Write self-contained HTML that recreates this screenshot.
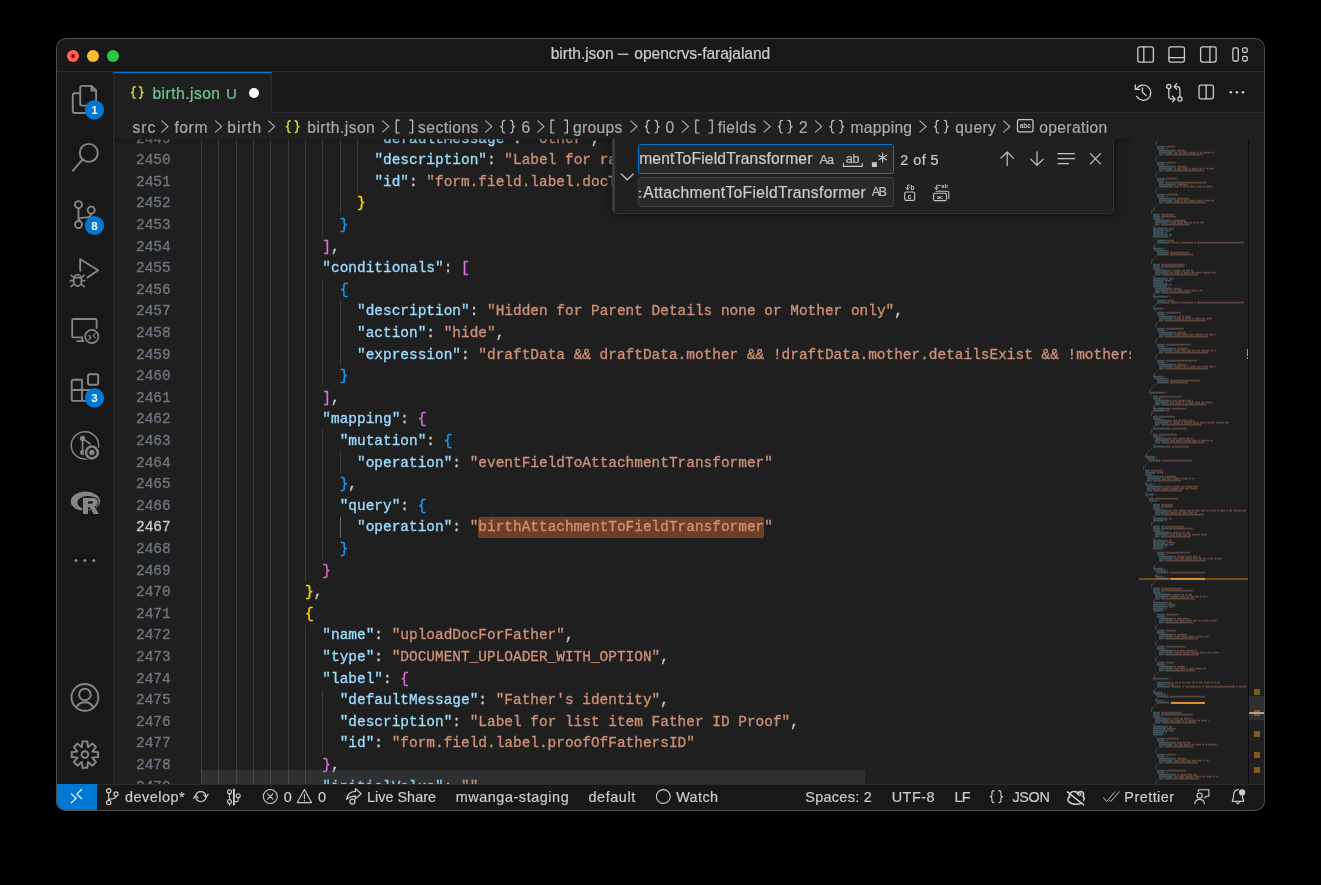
<!DOCTYPE html>
<html><head><meta charset="utf-8"><title>birth.json — opencrvs-farajaland</title>
<style>
*{box-sizing:border-box;margin:0;padding:0}
html,body{width:1321px;height:885px;background:#000;overflow:hidden}
body{font-family:"Liberation Sans",sans-serif;position:relative}
#win{position:absolute;left:56px;top:38px;width:1209px;height:773px;border-radius:10px;overflow:hidden;background:#181818}
#pg{position:absolute;left:-56px;top:-38px;width:1321px;height:885px;will-change:transform}
#wb{position:absolute;left:0;top:0;right:0;bottom:0;border-radius:10px;box-shadow:inset 0 0 0 1px #4e4e4e;pointer-events:none}
.a{position:absolute}
.t{position:absolute;white-space:pre;-webkit-text-stroke:0.2px}
.m{font-family:"Liberation Mono",monospace;font-size:14.446px;line-height:21.6px;white-space:pre;position:absolute;height:21.6px;-webkit-text-stroke:0.32px}
.n{color:#6e7681;text-align:right;left:120px;width:50.7px}
.k{color:#9cdcfe}.s{color:#ce9178}.p{color:#cccccc}.y{color:#ffd700}.v{color:#da70d6}.b{color:#179fff}
.g{position:absolute;width:1px;background:#3b3b3b}
svg{position:absolute;overflow:visible}
</style></head>
<body><div id="win"><div id="pg">
<div class="a" style="left:56px;top:38px;width:1209px;height:33px;background:#181818"></div>
<div class="a" style="left:56px;top:71px;width:1209px;height:1px;background:#2b2b2b"></div>
<div class="a" style="left:67px;top:50px;width:12px;height:12px;border-radius:6px;background:#ff5f57"></div>
<div class="a" style="left:87px;top:50px;width:12px;height:12px;border-radius:6px;background:#febc2e"></div>
<div class="a" style="left:107px;top:50px;width:12px;height:12px;border-radius:6px;background:#28c840"></div>
<div class="a" style="left:71px;top:54px;width:4px;height:4px;border-radius:2px;background:#8c0b04"></div>
<div class="a" style="left:56px;top:72px;width:57px;height:712px;background:#181818"></div>
<div class="a" style="left:113px;top:72px;width:1px;height:712px;background:#2b2b2b"></div>
<div class="a" style="left:114px;top:72px;width:1151px;height:41px;background:#181818"></div>
<div class="a" style="left:114px;top:112px;width:1151px;height:1px;background:#2b2b2b"></div>
<div class="a" style="left:114px;top:72px;width:158px;height:41px;background:#1f1f1f;border-top:1px solid #0078d4;border-right:1px solid #2b2b2b"></div>
<div class="a" style="left:249px;top:88px;width:10px;height:10px;border-radius:5px;background:#ffffff"></div>
<div class="a" style="left:114px;top:113px;width:1151px;height:671px;background:#1f1f1f"></div>
<div class="a" style="left:56px;top:783.9px;width:1209px;height:27.1px;background:#181818;border-top:1.7px solid #2b2b2b"></div>
<div class="a" style="left:56px;top:784px;width:41px;height:27px;background:#0078d4"></div><div class="a" style="left:114px;top:139.4px;width:1017.2px;height:644.6px;overflow:hidden"><div class="a" style="left:-114px;top:-139.4px;width:1321px;height:885px">
<div class="a" style="left:478.41px;top:517.20px;width:286.08px;height:21.2px;background:#6f3e26;border:1px solid #7d4320;border-radius:2px"></div>
<div class="g" style="left:201.00px;top:128.00px;height:21.6px"></div>
<div class="g" style="left:218.34px;top:128.00px;height:21.6px"></div>
<div class="g" style="left:235.68px;top:128.00px;height:21.6px"></div>
<div class="g" style="left:253.01px;top:128.00px;height:21.6px"></div>
<div class="g" style="left:270.35px;top:128.00px;height:21.6px"></div>
<div class="g" style="left:287.69px;top:128.00px;height:21.6px"></div>
<div class="g" style="left:305.03px;top:128.00px;height:21.6px"></div>
<div class="g" style="left:322.37px;top:128.00px;height:21.6px"></div>
<div class="g" style="left:339.70px;top:128.00px;height:21.6px"></div>
<div class="g" style="left:357.04px;top:128.00px;height:21.6px"></div>
<div class="g" style="left:201.00px;top:149.60px;height:21.6px"></div>
<div class="g" style="left:218.34px;top:149.60px;height:21.6px"></div>
<div class="g" style="left:235.68px;top:149.60px;height:21.6px"></div>
<div class="g" style="left:253.01px;top:149.60px;height:21.6px"></div>
<div class="g" style="left:270.35px;top:149.60px;height:21.6px"></div>
<div class="g" style="left:287.69px;top:149.60px;height:21.6px"></div>
<div class="g" style="left:305.03px;top:149.60px;height:21.6px"></div>
<div class="g" style="left:322.37px;top:149.60px;height:21.6px"></div>
<div class="g" style="left:339.70px;top:149.60px;height:21.6px"></div>
<div class="g" style="left:357.04px;top:149.60px;height:21.6px"></div>
<div class="g" style="left:201.00px;top:171.20px;height:21.6px"></div>
<div class="g" style="left:218.34px;top:171.20px;height:21.6px"></div>
<div class="g" style="left:235.68px;top:171.20px;height:21.6px"></div>
<div class="g" style="left:253.01px;top:171.20px;height:21.6px"></div>
<div class="g" style="left:270.35px;top:171.20px;height:21.6px"></div>
<div class="g" style="left:287.69px;top:171.20px;height:21.6px"></div>
<div class="g" style="left:305.03px;top:171.20px;height:21.6px"></div>
<div class="g" style="left:322.37px;top:171.20px;height:21.6px"></div>
<div class="g" style="left:339.70px;top:171.20px;height:21.6px"></div>
<div class="g" style="left:357.04px;top:171.20px;height:21.6px"></div>
<div class="g" style="left:201.00px;top:192.80px;height:21.6px"></div>
<div class="g" style="left:218.34px;top:192.80px;height:21.6px"></div>
<div class="g" style="left:235.68px;top:192.80px;height:21.6px"></div>
<div class="g" style="left:253.01px;top:192.80px;height:21.6px"></div>
<div class="g" style="left:270.35px;top:192.80px;height:21.6px"></div>
<div class="g" style="left:287.69px;top:192.80px;height:21.6px"></div>
<div class="g" style="left:305.03px;top:192.80px;height:21.6px"></div>
<div class="g" style="left:322.37px;top:192.80px;height:21.6px"></div>
<div class="g" style="left:339.70px;top:192.80px;height:21.6px"></div>
<div class="g" style="left:201.00px;top:214.40px;height:21.6px"></div>
<div class="g" style="left:218.34px;top:214.40px;height:21.6px"></div>
<div class="g" style="left:235.68px;top:214.40px;height:21.6px"></div>
<div class="g" style="left:253.01px;top:214.40px;height:21.6px"></div>
<div class="g" style="left:270.35px;top:214.40px;height:21.6px"></div>
<div class="g" style="left:287.69px;top:214.40px;height:21.6px"></div>
<div class="g" style="left:305.03px;top:214.40px;height:21.6px"></div>
<div class="g" style="left:322.37px;top:214.40px;height:21.6px"></div>
<div class="g" style="left:201.00px;top:236.00px;height:21.6px"></div>
<div class="g" style="left:218.34px;top:236.00px;height:21.6px"></div>
<div class="g" style="left:235.68px;top:236.00px;height:21.6px"></div>
<div class="g" style="left:253.01px;top:236.00px;height:21.6px"></div>
<div class="g" style="left:270.35px;top:236.00px;height:21.6px"></div>
<div class="g" style="left:287.69px;top:236.00px;height:21.6px"></div>
<div class="g" style="left:305.03px;top:236.00px;height:21.6px"></div>
<div class="g" style="left:201.00px;top:257.60px;height:21.6px"></div>
<div class="g" style="left:218.34px;top:257.60px;height:21.6px"></div>
<div class="g" style="left:235.68px;top:257.60px;height:21.6px"></div>
<div class="g" style="left:253.01px;top:257.60px;height:21.6px"></div>
<div class="g" style="left:270.35px;top:257.60px;height:21.6px"></div>
<div class="g" style="left:287.69px;top:257.60px;height:21.6px"></div>
<div class="g" style="left:305.03px;top:257.60px;height:21.6px"></div>
<div class="g" style="left:201.00px;top:279.20px;height:21.6px"></div>
<div class="g" style="left:218.34px;top:279.20px;height:21.6px"></div>
<div class="g" style="left:235.68px;top:279.20px;height:21.6px"></div>
<div class="g" style="left:253.01px;top:279.20px;height:21.6px"></div>
<div class="g" style="left:270.35px;top:279.20px;height:21.6px"></div>
<div class="g" style="left:287.69px;top:279.20px;height:21.6px"></div>
<div class="g" style="left:305.03px;top:279.20px;height:21.6px"></div>
<div class="g" style="left:322.37px;top:279.20px;height:21.6px"></div>
<div class="g" style="left:201.00px;top:300.80px;height:21.6px"></div>
<div class="g" style="left:218.34px;top:300.80px;height:21.6px"></div>
<div class="g" style="left:235.68px;top:300.80px;height:21.6px"></div>
<div class="g" style="left:253.01px;top:300.80px;height:21.6px"></div>
<div class="g" style="left:270.35px;top:300.80px;height:21.6px"></div>
<div class="g" style="left:287.69px;top:300.80px;height:21.6px"></div>
<div class="g" style="left:305.03px;top:300.80px;height:21.6px"></div>
<div class="g" style="left:322.37px;top:300.80px;height:21.6px"></div>
<div class="g" style="left:339.70px;top:300.80px;height:21.6px"></div>
<div class="g" style="left:201.00px;top:322.40px;height:21.6px"></div>
<div class="g" style="left:218.34px;top:322.40px;height:21.6px"></div>
<div class="g" style="left:235.68px;top:322.40px;height:21.6px"></div>
<div class="g" style="left:253.01px;top:322.40px;height:21.6px"></div>
<div class="g" style="left:270.35px;top:322.40px;height:21.6px"></div>
<div class="g" style="left:287.69px;top:322.40px;height:21.6px"></div>
<div class="g" style="left:305.03px;top:322.40px;height:21.6px"></div>
<div class="g" style="left:322.37px;top:322.40px;height:21.6px"></div>
<div class="g" style="left:339.70px;top:322.40px;height:21.6px"></div>
<div class="g" style="left:201.00px;top:344.00px;height:21.6px"></div>
<div class="g" style="left:218.34px;top:344.00px;height:21.6px"></div>
<div class="g" style="left:235.68px;top:344.00px;height:21.6px"></div>
<div class="g" style="left:253.01px;top:344.00px;height:21.6px"></div>
<div class="g" style="left:270.35px;top:344.00px;height:21.6px"></div>
<div class="g" style="left:287.69px;top:344.00px;height:21.6px"></div>
<div class="g" style="left:305.03px;top:344.00px;height:21.6px"></div>
<div class="g" style="left:322.37px;top:344.00px;height:21.6px"></div>
<div class="g" style="left:339.70px;top:344.00px;height:21.6px"></div>
<div class="g" style="left:201.00px;top:365.60px;height:21.6px"></div>
<div class="g" style="left:218.34px;top:365.60px;height:21.6px"></div>
<div class="g" style="left:235.68px;top:365.60px;height:21.6px"></div>
<div class="g" style="left:253.01px;top:365.60px;height:21.6px"></div>
<div class="g" style="left:270.35px;top:365.60px;height:21.6px"></div>
<div class="g" style="left:287.69px;top:365.60px;height:21.6px"></div>
<div class="g" style="left:305.03px;top:365.60px;height:21.6px"></div>
<div class="g" style="left:322.37px;top:365.60px;height:21.6px"></div>
<div class="g" style="left:201.00px;top:387.20px;height:21.6px"></div>
<div class="g" style="left:218.34px;top:387.20px;height:21.6px"></div>
<div class="g" style="left:235.68px;top:387.20px;height:21.6px"></div>
<div class="g" style="left:253.01px;top:387.20px;height:21.6px"></div>
<div class="g" style="left:270.35px;top:387.20px;height:21.6px"></div>
<div class="g" style="left:287.69px;top:387.20px;height:21.6px"></div>
<div class="g" style="left:305.03px;top:387.20px;height:21.6px"></div>
<div class="g" style="left:201.00px;top:408.80px;height:21.6px"></div>
<div class="g" style="left:218.34px;top:408.80px;height:21.6px"></div>
<div class="g" style="left:235.68px;top:408.80px;height:21.6px"></div>
<div class="g" style="left:253.01px;top:408.80px;height:21.6px"></div>
<div class="g" style="left:270.35px;top:408.80px;height:21.6px"></div>
<div class="g" style="left:287.69px;top:408.80px;height:21.6px"></div>
<div class="g" style="left:305.03px;top:408.80px;height:21.6px"></div>
<div class="g" style="left:201.00px;top:430.40px;height:21.6px"></div>
<div class="g" style="left:218.34px;top:430.40px;height:21.6px"></div>
<div class="g" style="left:235.68px;top:430.40px;height:21.6px"></div>
<div class="g" style="left:253.01px;top:430.40px;height:21.6px"></div>
<div class="g" style="left:270.35px;top:430.40px;height:21.6px"></div>
<div class="g" style="left:287.69px;top:430.40px;height:21.6px"></div>
<div class="g" style="left:305.03px;top:430.40px;height:21.6px"></div>
<div class="g" style="left:322.37px;top:430.40px;height:21.6px"></div>
<div class="g" style="left:201.00px;top:452.00px;height:21.6px"></div>
<div class="g" style="left:218.34px;top:452.00px;height:21.6px"></div>
<div class="g" style="left:235.68px;top:452.00px;height:21.6px"></div>
<div class="g" style="left:253.01px;top:452.00px;height:21.6px"></div>
<div class="g" style="left:270.35px;top:452.00px;height:21.6px"></div>
<div class="g" style="left:287.69px;top:452.00px;height:21.6px"></div>
<div class="g" style="left:305.03px;top:452.00px;height:21.6px"></div>
<div class="g" style="left:322.37px;top:452.00px;height:21.6px"></div>
<div class="g" style="left:339.70px;top:452.00px;height:21.6px"></div>
<div class="g" style="left:201.00px;top:473.60px;height:21.6px"></div>
<div class="g" style="left:218.34px;top:473.60px;height:21.6px"></div>
<div class="g" style="left:235.68px;top:473.60px;height:21.6px"></div>
<div class="g" style="left:253.01px;top:473.60px;height:21.6px"></div>
<div class="g" style="left:270.35px;top:473.60px;height:21.6px"></div>
<div class="g" style="left:287.69px;top:473.60px;height:21.6px"></div>
<div class="g" style="left:305.03px;top:473.60px;height:21.6px"></div>
<div class="g" style="left:322.37px;top:473.60px;height:21.6px"></div>
<div class="g" style="left:201.00px;top:495.20px;height:21.6px"></div>
<div class="g" style="left:218.34px;top:495.20px;height:21.6px"></div>
<div class="g" style="left:235.68px;top:495.20px;height:21.6px"></div>
<div class="g" style="left:253.01px;top:495.20px;height:21.6px"></div>
<div class="g" style="left:270.35px;top:495.20px;height:21.6px"></div>
<div class="g" style="left:287.69px;top:495.20px;height:21.6px"></div>
<div class="g" style="left:305.03px;top:495.20px;height:21.6px"></div>
<div class="g" style="left:322.37px;top:495.20px;height:21.6px"></div>
<div class="g" style="left:201.00px;top:516.80px;height:21.6px"></div>
<div class="g" style="left:218.34px;top:516.80px;height:21.6px"></div>
<div class="g" style="left:235.68px;top:516.80px;height:21.6px"></div>
<div class="g" style="left:253.01px;top:516.80px;height:21.6px"></div>
<div class="g" style="left:270.35px;top:516.80px;height:21.6px"></div>
<div class="g" style="left:287.69px;top:516.80px;height:21.6px"></div>
<div class="g" style="left:305.03px;top:516.80px;height:21.6px"></div>
<div class="g" style="left:322.37px;top:516.80px;height:21.6px"></div>
<div class="g" style="left:339.70px;top:516.80px;height:21.6px;background:#6a6a6a"></div>
<div class="g" style="left:201.00px;top:538.40px;height:21.6px"></div>
<div class="g" style="left:218.34px;top:538.40px;height:21.6px"></div>
<div class="g" style="left:235.68px;top:538.40px;height:21.6px"></div>
<div class="g" style="left:253.01px;top:538.40px;height:21.6px"></div>
<div class="g" style="left:270.35px;top:538.40px;height:21.6px"></div>
<div class="g" style="left:287.69px;top:538.40px;height:21.6px"></div>
<div class="g" style="left:305.03px;top:538.40px;height:21.6px"></div>
<div class="g" style="left:322.37px;top:538.40px;height:21.6px"></div>
<div class="g" style="left:201.00px;top:560.00px;height:21.6px"></div>
<div class="g" style="left:218.34px;top:560.00px;height:21.6px"></div>
<div class="g" style="left:235.68px;top:560.00px;height:21.6px"></div>
<div class="g" style="left:253.01px;top:560.00px;height:21.6px"></div>
<div class="g" style="left:270.35px;top:560.00px;height:21.6px"></div>
<div class="g" style="left:287.69px;top:560.00px;height:21.6px"></div>
<div class="g" style="left:305.03px;top:560.00px;height:21.6px"></div>
<div class="g" style="left:201.00px;top:581.60px;height:21.6px"></div>
<div class="g" style="left:218.34px;top:581.60px;height:21.6px"></div>
<div class="g" style="left:235.68px;top:581.60px;height:21.6px"></div>
<div class="g" style="left:253.01px;top:581.60px;height:21.6px"></div>
<div class="g" style="left:270.35px;top:581.60px;height:21.6px"></div>
<div class="g" style="left:287.69px;top:581.60px;height:21.6px"></div>
<div class="g" style="left:201.00px;top:603.20px;height:21.6px"></div>
<div class="g" style="left:218.34px;top:603.20px;height:21.6px"></div>
<div class="g" style="left:235.68px;top:603.20px;height:21.6px"></div>
<div class="g" style="left:253.01px;top:603.20px;height:21.6px"></div>
<div class="g" style="left:270.35px;top:603.20px;height:21.6px"></div>
<div class="g" style="left:287.69px;top:603.20px;height:21.6px"></div>
<div class="g" style="left:201.00px;top:624.80px;height:21.6px"></div>
<div class="g" style="left:218.34px;top:624.80px;height:21.6px"></div>
<div class="g" style="left:235.68px;top:624.80px;height:21.6px"></div>
<div class="g" style="left:253.01px;top:624.80px;height:21.6px"></div>
<div class="g" style="left:270.35px;top:624.80px;height:21.6px"></div>
<div class="g" style="left:287.69px;top:624.80px;height:21.6px"></div>
<div class="g" style="left:305.03px;top:624.80px;height:21.6px"></div>
<div class="g" style="left:201.00px;top:646.40px;height:21.6px"></div>
<div class="g" style="left:218.34px;top:646.40px;height:21.6px"></div>
<div class="g" style="left:235.68px;top:646.40px;height:21.6px"></div>
<div class="g" style="left:253.01px;top:646.40px;height:21.6px"></div>
<div class="g" style="left:270.35px;top:646.40px;height:21.6px"></div>
<div class="g" style="left:287.69px;top:646.40px;height:21.6px"></div>
<div class="g" style="left:305.03px;top:646.40px;height:21.6px"></div>
<div class="g" style="left:201.00px;top:668.00px;height:21.6px"></div>
<div class="g" style="left:218.34px;top:668.00px;height:21.6px"></div>
<div class="g" style="left:235.68px;top:668.00px;height:21.6px"></div>
<div class="g" style="left:253.01px;top:668.00px;height:21.6px"></div>
<div class="g" style="left:270.35px;top:668.00px;height:21.6px"></div>
<div class="g" style="left:287.69px;top:668.00px;height:21.6px"></div>
<div class="g" style="left:305.03px;top:668.00px;height:21.6px"></div>
<div class="g" style="left:201.00px;top:689.60px;height:21.6px"></div>
<div class="g" style="left:218.34px;top:689.60px;height:21.6px"></div>
<div class="g" style="left:235.68px;top:689.60px;height:21.6px"></div>
<div class="g" style="left:253.01px;top:689.60px;height:21.6px"></div>
<div class="g" style="left:270.35px;top:689.60px;height:21.6px"></div>
<div class="g" style="left:287.69px;top:689.60px;height:21.6px"></div>
<div class="g" style="left:305.03px;top:689.60px;height:21.6px"></div>
<div class="g" style="left:322.37px;top:689.60px;height:21.6px"></div>
<div class="g" style="left:201.00px;top:711.20px;height:21.6px"></div>
<div class="g" style="left:218.34px;top:711.20px;height:21.6px"></div>
<div class="g" style="left:235.68px;top:711.20px;height:21.6px"></div>
<div class="g" style="left:253.01px;top:711.20px;height:21.6px"></div>
<div class="g" style="left:270.35px;top:711.20px;height:21.6px"></div>
<div class="g" style="left:287.69px;top:711.20px;height:21.6px"></div>
<div class="g" style="left:305.03px;top:711.20px;height:21.6px"></div>
<div class="g" style="left:322.37px;top:711.20px;height:21.6px"></div>
<div class="g" style="left:201.00px;top:732.80px;height:21.6px"></div>
<div class="g" style="left:218.34px;top:732.80px;height:21.6px"></div>
<div class="g" style="left:235.68px;top:732.80px;height:21.6px"></div>
<div class="g" style="left:253.01px;top:732.80px;height:21.6px"></div>
<div class="g" style="left:270.35px;top:732.80px;height:21.6px"></div>
<div class="g" style="left:287.69px;top:732.80px;height:21.6px"></div>
<div class="g" style="left:305.03px;top:732.80px;height:21.6px"></div>
<div class="g" style="left:322.37px;top:732.80px;height:21.6px"></div>
<div class="g" style="left:201.00px;top:754.40px;height:21.6px"></div>
<div class="g" style="left:218.34px;top:754.40px;height:21.6px"></div>
<div class="g" style="left:235.68px;top:754.40px;height:21.6px"></div>
<div class="g" style="left:253.01px;top:754.40px;height:21.6px"></div>
<div class="g" style="left:270.35px;top:754.40px;height:21.6px"></div>
<div class="g" style="left:287.69px;top:754.40px;height:21.6px"></div>
<div class="g" style="left:305.03px;top:754.40px;height:21.6px"></div>
<div class="g" style="left:201.00px;top:776.00px;height:21.6px"></div>
<div class="g" style="left:218.34px;top:776.00px;height:21.6px"></div>
<div class="g" style="left:235.68px;top:776.00px;height:21.6px"></div>
<div class="g" style="left:253.01px;top:776.00px;height:21.6px"></div>
<div class="g" style="left:270.35px;top:776.00px;height:21.6px"></div>
<div class="g" style="left:287.69px;top:776.00px;height:21.6px"></div>
<div class="g" style="left:305.03px;top:776.00px;height:21.6px"></div>
<div class="m n" style="top:128.60px">2449</div>
<div class="m" style="left:374.38px;top:128.60px"><span class="k">&quot;defaultMessage&quot;</span><span class="p">: </span><span class="s">&quot;Other&quot;</span><span class="p">,</span></div>
<div class="m n" style="top:150.20px">2450</div>
<div class="m" style="left:374.38px;top:150.20px"><span class="k">&quot;description&quot;</span><span class="p">: </span><span class="s">&quot;Label for radio option Other&quot;,</span></div>
<div class="m n" style="top:171.80px">2451</div>
<div class="m" style="left:374.38px;top:171.80px"><span class="k">&quot;id&quot;</span><span class="p">: </span><span class="s">&quot;form.field.label.docTypeOther&quot;</span></div>
<div class="m n" style="top:193.40px">2452</div>
<div class="m" style="left:357.04px;top:193.40px"><span class="y">}</span></div>
<div class="m n" style="top:215.00px">2453</div>
<div class="m" style="left:339.70px;top:215.00px"><span class="b">}</span></div>
<div class="m n" style="top:236.60px">2454</div>
<div class="m" style="left:322.37px;top:236.60px"><span class="v">]</span><span class="p">,</span></div>
<div class="m n" style="top:258.20px">2455</div>
<div class="m" style="left:322.37px;top:258.20px"><span class="k">&quot;conditionals&quot;</span><span class="p">: </span><span class="v">[</span></div>
<div class="m n" style="top:279.80px">2456</div>
<div class="m" style="left:339.70px;top:279.80px"><span class="b">{</span></div>
<div class="m n" style="top:301.40px">2457</div>
<div class="m" style="left:357.04px;top:301.40px"><span class="k">&quot;description&quot;</span><span class="p">: </span><span class="s">&quot;Hidden for Parent Details none or Mother only&quot;</span><span class="p">,</span></div>
<div class="m n" style="top:323.00px">2458</div>
<div class="m" style="left:357.04px;top:323.00px"><span class="k">&quot;action&quot;</span><span class="p">: </span><span class="s">&quot;hide&quot;</span><span class="p">,</span></div>
<div class="m n" style="top:344.60px">2459</div>
<div class="m" style="left:357.04px;top:344.60px"><span class="k">&quot;expression&quot;</span><span class="p">: </span><span class="s">&quot;draftData &amp;&amp; draftData.mother &amp;&amp; !draftData.mother.detailsExist &amp;&amp; !mothersDetailsExistBasedOnContactAndInformant&quot;</span></div>
<div class="m n" style="top:366.20px">2460</div>
<div class="m" style="left:339.70px;top:366.20px"><span class="b">}</span></div>
<div class="m n" style="top:387.80px">2461</div>
<div class="m" style="left:322.37px;top:387.80px"><span class="v">]</span><span class="p">,</span></div>
<div class="m n" style="top:409.40px">2462</div>
<div class="m" style="left:322.37px;top:409.40px"><span class="k">&quot;mapping&quot;</span><span class="p">: </span><span class="v">{</span></div>
<div class="m n" style="top:431.00px">2463</div>
<div class="m" style="left:339.70px;top:431.00px"><span class="k">&quot;mutation&quot;</span><span class="p">: </span><span class="b">{</span></div>
<div class="m n" style="top:452.60px">2464</div>
<div class="m" style="left:357.04px;top:452.60px"><span class="k">&quot;operation&quot;</span><span class="p">: </span><span class="s">&quot;eventFieldToAttachmentTransformer&quot;</span></div>
<div class="m n" style="top:474.20px">2465</div>
<div class="m" style="left:339.70px;top:474.20px"><span class="b">}</span><span class="p">,</span></div>
<div class="m n" style="top:495.80px">2466</div>
<div class="m" style="left:339.70px;top:495.80px"><span class="k">&quot;query&quot;</span><span class="p">: </span><span class="b">{</span></div>
<div class="m n" style="top:517.40px;color:#cccccc">2467</div>
<div class="m" style="left:357.04px;top:517.40px"><span class="k">&quot;operation&quot;</span><span class="p">: </span><span class="s">&quot;birthAttachmentToFieldTransformer&quot;</span></div>
<div class="m n" style="top:539.00px">2468</div>
<div class="m" style="left:339.70px;top:539.00px"><span class="b">}</span></div>
<div class="m n" style="top:560.60px">2469</div>
<div class="m" style="left:322.37px;top:560.60px"><span class="v">}</span></div>
<div class="m n" style="top:582.20px">2470</div>
<div class="m" style="left:305.03px;top:582.20px"><span class="y">}</span><span class="p">,</span></div>
<div class="m n" style="top:603.80px">2471</div>
<div class="m" style="left:305.03px;top:603.80px"><span class="y">{</span></div>
<div class="m n" style="top:625.40px">2472</div>
<div class="m" style="left:322.37px;top:625.40px"><span class="k">&quot;name&quot;</span><span class="p">: </span><span class="s">&quot;uploadDocForFather&quot;</span><span class="p">,</span></div>
<div class="m n" style="top:647.00px">2473</div>
<div class="m" style="left:322.37px;top:647.00px"><span class="k">&quot;type&quot;</span><span class="p">: </span><span class="s">&quot;DOCUMENT_UPLOADER_WITH_OPTION&quot;</span><span class="p">,</span></div>
<div class="m n" style="top:668.60px">2474</div>
<div class="m" style="left:322.37px;top:668.60px"><span class="k">&quot;label&quot;</span><span class="p">: </span><span class="v">{</span></div>
<div class="m n" style="top:690.20px">2475</div>
<div class="m" style="left:339.70px;top:690.20px"><span class="k">&quot;defaultMessage&quot;</span><span class="p">: </span><span class="s">&quot;Father&#x27;s identity&quot;</span><span class="p">,</span></div>
<div class="m n" style="top:711.80px">2476</div>
<div class="m" style="left:339.70px;top:711.80px"><span class="k">&quot;description&quot;</span><span class="p">: </span><span class="s">&quot;Label for list item Father ID Proof&quot;</span><span class="p">,</span></div>
<div class="m n" style="top:733.40px">2477</div>
<div class="m" style="left:339.70px;top:733.40px"><span class="k">&quot;id&quot;</span><span class="p">: </span><span class="s">&quot;form.field.label.proofOfFathersID&quot;</span></div>
<div class="m n" style="top:755.00px">2478</div>
<div class="m" style="left:322.37px;top:755.00px"><span class="v">}</span><span class="p">,</span></div>
<div class="m n" style="top:776.60px">2479</div>
<div class="m" style="left:322.37px;top:776.60px"><span class="k">&quot;initialValue&quot;</span><span class="p">: </span><span class="s">&quot;&quot;</span><span class="p">,</span></div>
<div class="a" style="left:201px;top:770px;width:664px;height:14px;background:rgba(110,118,129,0.2)"></div>
</div></div>
<div class="a" style="left:114px;top:139.4px;width:1017px;height:6px;background:linear-gradient(rgba(0,0,0,0.22),rgba(0,0,0,0))"></div><div class="a" style="left:1131px;top:139.4px;width:118px;height:644.6px;background:#1f1f1f"></div>
<div class="a" style="left:1125px;top:139.4px;width:6px;height:644.6px;background:linear-gradient(90deg,rgba(0,0,0,0),rgba(0,0,0,0.07))"></div>
<div class="a" style="left:1139px;top:577.6px;width:108.5px;height:2px;background:#7a4c11"></div>
<div class="a" style="left:1171.0px;top:577.5px;width:33.5px;height:2.2px;background:#e68a0d"></div>
<div class="a" style="left:1171.0px;top:701.8px;width:33.5px;height:2.2px;background:#e68a0d"></div>
<svg style="left:0;top:0" width="1321" height="885" viewBox="0 0 1321 885" shape-rendering="auto"><path d="M1157 146.6h7M1157 148.6h7M1159 150.6h16M1159 152.6h13M1159 154.6h4M1157 162.6h7M1157 164.6h7M1159 166.6h16M1159 168.6h13M1159 170.6h4M1157 178.6h7M1157 180.6h7M1159 182.6h4M1159 184.6h16M1159 186.6h13M1157 194.6h7M1157 196.6h7M1159 198.6h16M1159 200.6h13M1159 202.6h4M1153 214.6h6M1153 216.6h6M1153 218.6h7M1155 220.6h16M1155 222.6h13M1155 224.6h4M1153 228.6h14M1153 230.6h10M1153 232.6h10M1153 234.6h14M1153 236.6h14M1157 240.6h8M1157 242.6h12M1153 248.6h9M1155 250.6h10M1157 252.6h11M1157 254.6h11M1153 264.6h6M1153 266.6h6M1153 268.6h7M1155 270.6h16M1155 272.6h13M1155 274.6h4M1153 278.6h14M1153 280.6h10M1153 282.6h10M1153 284.6h14M1153 286.6h13M1155 288.6h16M1155 290.6h13M1155 292.6h4M1153 296.6h14M1157 300.6h8M1157 302.6h12M1153 308.6h9M1157 312.6h7M1157 314.6h7M1159 316.6h16M1159 318.6h13M1159 320.6h4M1157 328.6h7M1157 330.6h7M1159 332.6h16M1159 334.6h13M1159 336.6h4M1157 344.6h7M1157 346.6h7M1159 348.6h16M1159 350.6h13M1159 352.6h4M1157 360.6h7M1157 362.6h7M1159 364.6h16M1159 366.6h13M1159 368.6h4M1153 376.6h9M1155 378.6h10M1157 380.6h11M1157 382.6h11M1149 392.6h15M1153 396.6h4M1153 398.6h7M1155 400.6h16M1155 402.6h13M1155 404.6h4M1153 408.6h17M1153 410.6h11M1153 416.6h4M1153 418.6h7M1155 420.6h16M1155 422.6h13M1155 424.6h4M1153 428.6h17M1153 434.6h4M1153 436.6h7M1155 438.6h16M1155 440.6h13M1155 442.6h4M1153 446.6h17M1145 456.6h9M1147 458.6h7M1149 460.6h11M1145 470.6h4M1145 472.6h10M1145 474.6h6M1147 476.6h16M1147 478.6h13M1147 480.6h4M1145 484.6h7M1147 486.6h16M1147 488.6h13M1147 490.6h4M1145 494.6h8M1149 498.6h4M1149 500.6h8M1153 504.6h6M1153 506.6h6M1153 508.6h7M1155 510.6h16M1155 512.6h13M1155 514.6h4M1153 518.6h14M1153 520.6h10M1153 526.6h6M1153 528.6h6M1153 530.6h7M1155 532.6h16M1155 534.6h13M1155 536.6h4M1153 540.6h14M1153 542.6h12M1153 544.6h14M1153 546.6h10M1153 548.6h9M1157 552.6h7M1157 554.6h7M1159 556.6h16M1159 558.6h13M1159 560.6h4M1153 568.6h9M1155 570.6h10M1157 572.6h11M1155 576.6h7M1157 578.6h11M1153 588.6h6M1153 590.6h6M1153 592.6h7M1155 594.6h16M1155 596.6h13M1155 598.6h4M1153 602.6h14M1153 604.6h12M1153 606.6h14M1153 608.6h10M1153 610.6h9M1157 614.6h7M1157 616.6h7M1159 618.6h16M1159 620.6h13M1159 622.6h4M1157 630.6h7M1157 632.6h7M1159 634.6h16M1159 636.6h13M1159 638.6h4M1157 646.6h7M1157 648.6h7M1159 650.6h16M1159 652.6h13M1159 654.6h4M1157 662.6h7M1157 664.6h7M1159 666.6h16M1159 668.6h13M1159 670.6h4M1153 678.6h14M1157 682.6h13M1157 684.6h8M1157 686.6h12M1153 692.6h9M1155 694.6h10M1157 696.6h11M1155 700.6h7M1157 702.6h11M1153 712.6h6M1153 714.6h6M1153 716.6h7M1155 718.6h16M1155 720.6h13M1155 722.6h4M1153 726.6h14M1153 728.6h12M1153 730.6h14M1153 732.6h10M1153 734.6h9M1157 738.6h7M1157 740.6h7M1159 742.6h16M1159 744.6h13M1159 746.6h4M1157 754.6h7M1157 756.6h7M1159 758.6h16M1159 760.6h13M1159 762.6h4M1157 770.6h7M1157 772.6h7M1159 774.6h16M1159 776.6h13M1159 778.6h4" stroke="#9cdcfe" stroke-opacity="0.26" stroke-width="1.7" fill="none"/><path d="M1166 146.6h8M1177 150.6h8M1174 152.6h4M1179 152.6h3M1183 152.6h5M1189 152.6h7M1197 152.6h2M1200 152.6h2M1203 152.6h8M1212 152.6h1M1165 154.6h38M1166 162.6h9M1177 166.6h9M1174 168.6h2M1177 168.6h4M1182 168.6h6M1189 168.6h2M1192 168.6h6M1199 168.6h3M1203 168.6h2M1206 168.6h2M1209 168.6h4M1165 170.6h39M1166 178.6h10M1165 182.6h41M1177 184.6h10M1174 186.6h5M1180 186.6h2M1183 186.6h3M1187 186.6h2M1190 186.6h6M1197 186.6h5M1203 186.6h2M1206 186.6h6M1166 194.6h11M1177 198.6h11M1174 200.6h6M1181 200.6h2M1184 200.6h3M1188 200.6h7M1196 200.6h7M1204 200.6h6M1211 200.6h2M1165 202.6h40M1161 214.6h12M1161 216.6h14M1173 220.6h12M1170 222.6h6M1177 222.6h6M1184 222.6h5M1190 222.6h2M1193 222.6h3M1197 222.6h2M1200 222.6h3M1161 224.6h29M1169 234.6h2M1167 240.6h6M1171 242.6h9M1181 242.6h12M1194 242.6h2M1197 242.6h47M1170 252.6h18M1170 254.6h23M1161 264.6h23M1161 266.6h22M1173 270.6h8M1182 270.6h3M1186 270.6h4M1191 270.6h2M1170 272.6h3M1174 272.6h6M1181 272.6h2M1184 272.6h6M1191 272.6h4M1196 272.6h6M1203 272.6h8M1212 272.6h3M1161 274.6h37M1169 284.6h2M1173 288.6h7M1170 290.6h3M1174 290.6h2M1177 290.6h6M1184 290.6h6M1191 290.6h7M1199 290.6h3M1161 292.6h30M1167 300.6h6M1171 302.6h9M1181 302.6h12M1194 302.6h2M1197 302.6h47M1166 312.6h14M1177 316.6h4M1182 316.6h2M1185 316.6h5M1174 318.6h7M1182 318.6h2M1185 318.6h6M1192 318.6h2M1195 318.6h6M1202 318.6h3M1206 318.6h5M1165 320.6h41M1166 328.6h17M1177 332.6h8M1174 334.6h7M1182 334.6h6M1189 334.6h5M1195 334.6h8M1204 334.6h4M1209 334.6h5M1165 336.6h43M1166 344.6h24M1177 348.6h10M1174 350.6h6M1181 350.6h5M1187 350.6h4M1192 350.6h4M1197 350.6h3M1201 350.6h8M1210 350.6h3M1214 350.6h1M1165 352.6h43M1166 360.6h30M1177 364.6h9M1174 366.6h8M1183 366.6h3M1187 366.6h2M1190 366.6h6M1197 366.6h4M1202 366.6h6M1209 366.6h5M1165 368.6h43M1170 380.6h29M1170 382.6h18M1159 396.6h21M1173 400.6h4M1178 400.6h7M1186 400.6h5M1170 402.6h4M1175 402.6h6M1182 402.6h2M1185 402.6h2M1188 402.6h6M1195 402.6h5M1201 402.6h3M1205 402.6h7M1161 404.6h45M1172 408.6h14M1166 410.6h3M1159 416.6h15M1173 420.6h4M1178 420.6h3M1182 420.6h5M1188 420.6h5M1170 422.6h2M1173 422.6h7M1181 422.6h2M1184 422.6h8M1193 422.6h6M1200 422.6h6M1207 422.6h8M1216 422.6h8M1225 422.6h3M1161 424.6h40M1172 428.6h15M1159 434.6h17M1173 438.6h4M1178 438.6h7M1186 438.6h4M1191 438.6h1M1170 440.6h5M1176 440.6h6M1183 440.6h8M1192 440.6h5M1198 440.6h2M1201 440.6h8M1210 440.6h2M1161 442.6h43M1172 446.6h17M1162 460.6h30M1151 470.6h11M1157 472.6h6M1165 476.6h10M1162 478.6h4M1167 478.6h5M1173 478.6h7M1181 478.6h7M1189 478.6h2M1192 478.6h2M1153 480.6h28M1165 486.6h7M1173 486.6h7M1181 486.6h4M1186 486.6h7M1194 486.6h3M1162 488.6h7M1170 488.6h8M1179 488.6h5M1185 488.6h4M1190 488.6h6M1153 490.6h29M1155 498.6h22M1161 504.6h11M1161 506.6h11M1173 510.6h5M1179 510.6h7M1187 510.6h4M1192 510.6h2M1195 510.6h5M1201 510.6h4M1206 510.6h3M1210 510.6h6M1217 510.6h2M1220 510.6h5M1226 510.6h2M1229 510.6h3M1233 510.6h8M1242 510.6h4M1170 512.6h7M1178 512.6h3M1182 512.6h5M1188 512.6h5M1194 512.6h2M1161 514.6h43M1169 518.6h2M1161 526.6h22M1161 528.6h31M1173 532.6h5M1179 532.6h2M1182 532.6h3M1186 532.6h3M1170 534.6h5M1176 534.6h6M1183 534.6h4M1188 534.6h3M1192 534.6h8M1201 534.6h5M1161 536.6h30M1169 540.6h2M1167 542.6h7M1166 552.6h23M1177 556.6h8M1186 556.6h6M1193 556.6h4M1198 556.6h1M1174 558.6h5M1180 558.6h4M1185 558.6h7M1193 558.6h5M1199 558.6h3M1203 558.6h3M1207 558.6h2M1210 558.6h3M1214 558.6h3M1218 558.6h3M1165 560.6h41M1170 572.6h35M1170 578.6h35M1161 588.6h20M1161 590.6h31M1173 594.6h7M1181 594.6h3M1185 594.6h2M1188 594.6h3M1170 596.6h8M1179 596.6h6M1186 596.6h3M1190 596.6h4M1195 596.6h4M1200 596.6h2M1203 596.6h3M1161 598.6h34M1169 602.6h2M1167 604.6h8M1166 614.6h12M1177 618.6h5M1183 618.6h6M1174 620.6h4M1179 620.6h6M1186 620.6h6M1193 620.6h4M1198 620.6h3M1202 620.6h7M1210 620.6h6M1165 622.6h28M1166 630.6h9M1177 634.6h9M1174 636.6h6M1181 636.6h6M1188 636.6h7M1196 636.6h7M1204 636.6h4M1165 638.6h33M1166 646.6h19M1177 650.6h2M1180 650.6h5M1186 650.6h8M1195 650.6h1M1174 652.6h8M1183 652.6h7M1191 652.6h8M1200 652.6h6M1207 652.6h5M1213 652.6h5M1165 654.6h34M1166 662.6h7M1177 666.6h7M1174 668.6h5M1180 668.6h5M1186 668.6h2M1189 668.6h5M1195 668.6h7M1203 668.6h2M1165 670.6h30M1172 682.6h2M1175 682.6h3M1179 682.6h2M1182 682.6h3M1186 682.6h5M1192 682.6h3M1196 682.6h2M1199 682.6h4M1204 682.6h6M1211 682.6h2M1214 682.6h2M1217 682.6h2M1167 684.6h6M1171 686.6h10M1182 686.6h2M1185 686.6h16M1202 686.6h2M1205 686.6h30M1236 686.6h2M1239 686.6h8M1170 696.6h35M1170 702.6h35M1161 712.6h20M1161 714.6h31M1173 718.6h6M1180 718.6h3M1184 718.6h6M1191 718.6h1M1170 720.6h4M1175 720.6h6M1182 720.6h2M1185 720.6h2M1188 720.6h8M1197 720.6h3M1201 720.6h6M1161 722.6h35M1169 726.6h2M1167 728.6h8M1166 738.6h12M1177 742.6h5M1183 742.6h3M1187 742.6h3M1174 744.6h4M1179 744.6h4M1184 744.6h6M1191 744.6h4M1196 744.6h5M1202 744.6h2M1205 744.6h2M1208 744.6h8M1165 746.6h28M1166 754.6h9M1177 758.6h9M1174 760.6h5M1180 760.6h5M1186 760.6h5M1192 760.6h5M1198 760.6h4M1203 760.6h2M1206 760.6h2M1165 762.6h33M1166 770.6h19M1177 774.6h2M1180 774.6h7M1188 774.6h4M1193 774.6h3M1174 776.6h4M1179 776.6h5M1185 776.6h8M1194 776.6h7M1202 776.6h3M1206 776.6h6M1213 776.6h2M1216 776.6h2M1165 778.6h34" stroke="#ce9178" stroke-opacity="0.33" stroke-width="1.7" fill="none"/><path d="M1157 140.6h1M1155 142.6h2M1155 144.6h1M1164 146.6h1M1174 146.6h1M1164 148.6h1M1166 148.6h1M1175 150.6h1M1185 150.6h1M1172 152.6h1M1213 152.6h1M1163 154.6h1M1157 156.6h1M1155 158.6h2M1155 160.6h1M1164 162.6h1M1175 162.6h1M1164 164.6h1M1166 164.6h1M1175 166.6h1M1186 166.6h1M1172 168.6h1M1213 168.6h1M1163 170.6h1M1157 172.6h1M1155 174.6h2M1155 176.6h1M1164 178.6h1M1176 178.6h1M1164 180.6h1M1166 180.6h1M1163 182.6h1M1206 182.6h1M1175 184.6h1M1187 184.6h1M1172 186.6h1M1212 186.6h1M1157 188.6h1M1155 190.6h2M1155 192.6h1M1164 194.6h1M1177 194.6h1M1164 196.6h1M1166 196.6h1M1175 198.6h1M1188 198.6h1M1172 200.6h1M1213 200.6h1M1163 202.6h1M1157 204.6h1M1155 206.6h1M1153 208.6h2M1151 210.6h2M1151 212.6h1M1159 214.6h1M1173 214.6h1M1159 216.6h1M1175 216.6h1M1160 218.6h1M1162 218.6h1M1171 220.6h1M1185 220.6h1M1168 222.6h1M1203 222.6h1M1159 224.6h1M1153 226.6h2M1167 228.6h1M1173 228.6h1M1163 230.6h1M1170 230.6h1M1163 232.6h1M1165 232.6h2M1167 234.6h1M1171 234.6h1M1167 236.6h1M1169 236.6h1M1155 238.6h1M1165 240.6h1M1173 240.6h1M1169 242.6h1M1155 244.6h1M1153 246.6h2M1162 248.6h1M1164 248.6h1M1165 250.6h1M1167 250.6h1M1168 252.6h1M1188 252.6h1M1168 254.6h1M1155 256.6h1M1153 258.6h1M1151 260.6h2M1151 262.6h1M1159 264.6h1M1184 264.6h1M1159 266.6h1M1183 266.6h1M1160 268.6h1M1162 268.6h1M1171 270.6h1M1193 270.6h1M1168 272.6h1M1215 272.6h1M1159 274.6h1M1153 276.6h2M1167 278.6h1M1173 278.6h1M1163 280.6h1M1170 280.6h1M1163 282.6h1M1165 282.6h2M1167 284.6h1M1171 284.6h1M1166 286.6h1M1168 286.6h1M1171 288.6h1M1180 288.6h1M1168 290.6h1M1202 290.6h1M1159 292.6h1M1153 294.6h2M1167 296.6h1M1169 296.6h1M1155 298.6h1M1165 300.6h1M1173 300.6h1M1169 302.6h1M1155 304.6h1M1153 306.6h2M1162 308.6h1M1164 308.6h1M1155 310.6h1M1164 312.6h1M1180 312.6h1M1164 314.6h1M1166 314.6h1M1175 316.6h1M1190 316.6h1M1172 318.6h1M1211 318.6h1M1163 320.6h1M1157 322.6h1M1155 324.6h2M1155 326.6h1M1164 328.6h1M1183 328.6h1M1164 330.6h1M1166 330.6h1M1175 332.6h1M1185 332.6h1M1172 334.6h1M1215 334.6h1M1163 336.6h1M1157 338.6h1M1155 340.6h2M1155 342.6h1M1164 344.6h1M1190 344.6h1M1164 346.6h1M1166 346.6h1M1175 348.6h1M1187 348.6h1M1172 350.6h1M1215 350.6h1M1163 352.6h1M1157 354.6h1M1155 356.6h2M1155 358.6h1M1164 360.6h1M1196 360.6h1M1164 362.6h1M1166 362.6h1M1175 364.6h1M1186 364.6h1M1172 366.6h1M1215 366.6h1M1163 368.6h1M1157 370.6h1M1155 372.6h1M1153 374.6h2M1162 376.6h1M1164 376.6h1M1165 378.6h1M1167 378.6h1M1168 380.6h1M1199 380.6h1M1168 382.6h1M1155 384.6h1M1153 386.6h1M1151 388.6h1M1149 390.6h2M1164 392.6h1M1166 392.6h1M1151 394.6h1M1157 396.6h1M1180 396.6h1M1160 398.6h1M1162 398.6h1M1171 400.6h1M1192 400.6h1M1168 402.6h1M1212 402.6h1M1159 404.6h1M1153 406.6h2M1170 408.6h1M1186 408.6h1M1164 410.6h1M1151 412.6h2M1151 414.6h1M1157 416.6h1M1174 416.6h1M1160 418.6h1M1162 418.6h1M1171 420.6h1M1193 420.6h1M1168 422.6h1M1228 422.6h1M1159 424.6h1M1153 426.6h2M1170 428.6h1M1151 430.6h2M1151 432.6h1M1157 434.6h1M1176 434.6h1M1160 436.6h1M1162 436.6h1M1171 438.6h1M1192 438.6h1M1168 440.6h1M1212 440.6h1M1159 442.6h1M1153 444.6h2M1170 446.6h1M1151 448.6h1M1149 450.6h1M1147 452.6h1M1145 454.6h2M1154 456.6h1M1156 456.6h1M1154 458.6h1M1156 458.6h1M1160 460.6h1M1147 462.6h1M1145 464.6h1M1143 466.6h2M1143 468.6h1M1149 470.6h1M1162 470.6h1M1155 472.6h1M1163 472.6h1M1151 474.6h1M1153 474.6h1M1163 476.6h1M1175 476.6h1M1160 478.6h1M1195 478.6h1M1151 480.6h1M1145 482.6h2M1152 484.6h1M1154 484.6h1M1163 486.6h1M1197 486.6h1M1160 488.6h1M1196 488.6h1M1151 490.6h1M1145 492.6h2M1153 494.6h1M1155 494.6h1M1147 496.6h1M1153 498.6h1M1177 498.6h1M1157 500.6h1M1159 500.6h1M1151 502.6h1M1159 504.6h1M1172 504.6h1M1159 506.6h1M1172 506.6h1M1160 508.6h1M1162 508.6h1M1171 510.6h1M1168 512.6h1M1196 512.6h1M1159 514.6h1M1153 516.6h2M1167 518.6h1M1171 518.6h1M1163 520.6h1M1165 520.6h2M1151 522.6h2M1151 524.6h1M1159 526.6h1M1183 526.6h1M1159 528.6h1M1192 528.6h1M1160 530.6h1M1162 530.6h1M1171 532.6h1M1189 532.6h1M1168 534.6h1M1206 534.6h1M1159 536.6h1M1153 538.6h2M1167 540.6h1M1171 540.6h1M1165 542.6h1M1174 542.6h1M1167 544.6h1M1173 544.6h1M1163 546.6h1M1165 546.6h2M1162 548.6h1M1164 548.6h1M1155 550.6h1M1164 552.6h1M1189 552.6h1M1164 554.6h1M1166 554.6h1M1175 556.6h1M1199 556.6h1M1172 558.6h1M1221 558.6h1M1163 560.6h1M1157 562.6h1M1155 564.6h1M1153 566.6h2M1162 568.6h1M1164 568.6h1M1165 570.6h1M1167 570.6h1M1168 572.6h1M1155 574.6h2M1162 576.6h1M1164 576.6h1M1168 578.6h1M1155 580.6h1M1153 582.6h1M1151 584.6h2M1151 586.6h1M1159 588.6h1M1181 588.6h1M1159 590.6h1M1192 590.6h1M1160 592.6h1M1162 592.6h1M1171 594.6h1M1191 594.6h1M1168 596.6h1M1207 596.6h1M1159 598.6h1M1153 600.6h2M1167 602.6h1M1171 602.6h1M1165 604.6h1M1175 604.6h1M1167 606.6h1M1173 606.6h1M1163 608.6h1M1165 608.6h2M1162 610.6h1M1164 610.6h1M1155 612.6h1M1164 614.6h1M1178 614.6h1M1164 616.6h1M1166 616.6h1M1175 618.6h1M1190 618.6h1M1172 620.6h1M1216 620.6h1M1163 622.6h1M1157 624.6h1M1155 626.6h2M1155 628.6h1M1164 630.6h1M1175 630.6h1M1164 632.6h1M1166 632.6h1M1175 634.6h1M1186 634.6h1M1172 636.6h1M1208 636.6h1M1163 638.6h1M1157 640.6h1M1155 642.6h2M1155 644.6h1M1164 646.6h1M1185 646.6h1M1164 648.6h1M1166 648.6h1M1175 650.6h1M1196 650.6h1M1172 652.6h1M1218 652.6h1M1163 654.6h1M1157 656.6h1M1155 658.6h2M1155 660.6h1M1164 662.6h1M1173 662.6h1M1164 664.6h1M1166 664.6h1M1175 666.6h1M1184 666.6h1M1172 668.6h1M1205 668.6h1M1163 670.6h1M1157 672.6h1M1155 674.6h1M1153 676.6h2M1167 678.6h1M1169 678.6h1M1155 680.6h1M1170 682.6h1M1219 682.6h1M1165 684.6h1M1173 684.6h1M1169 686.6h1M1155 688.6h1M1153 690.6h2M1162 692.6h1M1164 692.6h1M1165 694.6h1M1167 694.6h1M1168 696.6h1M1155 698.6h2M1162 700.6h1M1164 700.6h1M1168 702.6h1M1155 704.6h1M1153 706.6h1M1151 708.6h2M1151 710.6h1M1159 712.6h1M1181 712.6h1M1159 714.6h1M1192 714.6h1M1160 716.6h1M1162 716.6h1M1171 718.6h1M1192 718.6h1M1168 720.6h1M1208 720.6h1M1159 722.6h1M1153 724.6h2M1167 726.6h1M1171 726.6h1M1165 728.6h1M1175 728.6h1M1167 730.6h1M1173 730.6h1M1163 732.6h1M1165 732.6h2M1162 734.6h1M1164 734.6h1M1155 736.6h1M1164 738.6h1M1178 738.6h1M1164 740.6h1M1166 740.6h1M1175 742.6h1M1190 742.6h1M1172 744.6h1M1216 744.6h1M1163 746.6h1M1157 748.6h1M1155 750.6h2M1155 752.6h1M1164 754.6h1M1175 754.6h1M1164 756.6h1M1166 756.6h1M1175 758.6h1M1186 758.6h1M1172 760.6h1M1208 760.6h1M1163 762.6h1M1157 764.6h1M1155 766.6h2M1155 768.6h1M1164 770.6h1M1185 770.6h1M1164 772.6h1M1166 772.6h1M1175 774.6h1M1196 774.6h1M1172 776.6h1M1218 776.6h1M1163 778.6h1M1157 780.6h1M1155 782.6h2" stroke="#cccccc" stroke-opacity="0.2" stroke-width="1.7" fill="none"/><path d="M1169 228.6h4M1165 230.6h5M1169 278.6h4M1165 280.6h5M1169 544.6h4M1169 606.6h4M1169 730.6h4" stroke="#569cd6" stroke-opacity="0.38" stroke-width="1.7" fill="none"/></svg>
<div class="a" style="left:1246.7px;top:348.6px;width:1.7px;height:7px;background:#c98d76"></div><div class="a" style="left:1246.7px;top:357.2px;width:1.7px;height:1.8px;background:#c98d76"></div>
<div class="a" style="left:1248.3px;top:139.4px;width:1px;height:644.6px;background:#0c0c0e"></div>
<div class="a" style="left:1249px;top:696px;width:15px;height:24px;background:rgba(110,118,129,0.2)"></div>
<div class="a" style="left:1254px;top:689.0px;width:6px;height:6.2px;background:#82581d"></div>
<div class="a" style="left:1254px;top:709.9px;width:6px;height:6.2px;background:#82581d"></div>
<div class="a" style="left:1254px;top:731.0px;width:6px;height:6.2px;background:#82581d"></div>
<div class="a" style="left:1254px;top:752.0px;width:6px;height:6.2px;background:#82581d"></div>
<div class="a" style="left:1254px;top:767.2px;width:6px;height:6.2px;background:#82581d"></div>
<div class="a" style="left:1249px;top:712px;width:15px;height:2px;background:#a3a3a3"></div><div class="a" style="left:612.2px;top:136px;width:501.8px;height:78px;background:#202020;border:1px solid #323232;border-top:none;border-radius:0 0 5px 5px;box-shadow:0 0 8px 2px rgba(0,0,0,0.36)"></div>
<div class="a" style="left:612.2px;top:139.4px;width:2.9px;height:72.6px;background:#3a3a3a;border-radius:0 0 0 3px"></div>
<div class="a" style="left:638.2px;top:144.2px;width:255.9px;height:29.7px;background:#292929;border:1px solid #0078d4;border-radius:3px"></div>
<div class="a" style="left:638.2px;top:177.4px;width:255.9px;height:29.3px;background:#292929;border:1px solid #3c3c3c;border-radius:3px"></div>
<div class="a" style="left:600px;top:113px;width:540px;height:26.4px;background:#1f1f1f"></div><svg style="left:0;top:0" width="1321" height="885" viewBox="0 0 1321 885"><path d="M91.5 85.9H82.2Q80.2 85.9 80.2 87.9V103.6Q80.2 105.6 82.2 105.6H94.1Q96.1 105.6 96.1 103.6V90.5Z M91.5 86.2V90.5H95.8" stroke="#868686" stroke-width="1.9" fill="none" stroke-linecap="round" stroke-linejoin="round" />
<path d="M80 93.3H74.8Q72.8 93.3 72.8 95.3V111Q72.8 113 74.8 113H88" stroke="#868686" stroke-width="1.9" fill="none" stroke-linecap="round" stroke-linejoin="round" />
<circle cx="88.8" cy="152.9" r="9.0" stroke="#868686" stroke-width="1.9" fill="none"/>
<path d="M82.4 159.6L72.8 170.8" stroke="#868686" stroke-width="1.9" fill="none" stroke-linecap="round" stroke-linejoin="round" />
<circle cx="78.5" cy="204.6" r="3.5" stroke="#868686" stroke-width="1.9" fill="none"/>
<circle cx="91.2" cy="210.1" r="3.5" stroke="#868686" stroke-width="1.9" fill="none"/>
<circle cx="78.5" cy="224.5" r="3.5" stroke="#868686" stroke-width="1.9" fill="none"/>
<path d="M78.5 208.2V220.8 M91.2 213.7C91.2 217.3 88 217.6 84.6 217.6C81 217.6 78.5 218.6 78.5 220.8" stroke="#868686" stroke-width="1.9" fill="none" stroke-linecap="round" stroke-linejoin="round" />
<path d="M80.2 270.8V259.2L98.2 270.3L87.3 277.6" stroke="#868686" stroke-width="1.9" fill="none" stroke-linecap="round" stroke-linejoin="round" />
<ellipse cx="77.6" cy="280.4" rx="3.9" ry="5.8" stroke="#868686" stroke-width="1.8" fill="none"/>
<path d="M73.9 277.6H81.3 M71 275.2L73.6 277.4 M84.2 275.2L81.6 277.4 M70.4 280.6H73.4 M84.8 280.6H81.8 M71 286.6L74 284.2 M84.2 286.6L81.2 284.2" stroke="#868686" stroke-width="1.7" fill="none" stroke-linecap="round" stroke-linejoin="round" />
<path d="M96.6 328.0V320.4Q96.6 319 95.2 319H73.6Q72.2 319 72.2 320.4V336Q72.2 337.4 73.6 337.4H82.3V341.1 M77.2 341.1H83.8" stroke="#868686" stroke-width="1.8" fill="none" stroke-linecap="round" stroke-linejoin="round" />
<circle cx="91.8" cy="336.5" r="6.6" stroke="#868686" stroke-width="1.7" fill="none"/>
<path d="M88.9 335.4L90.8 337.5L88.9 339.7 M95.2 333.6L93.2 335.6L95.2 337.6" stroke="#868686" stroke-width="1.2" fill="none" stroke-linecap="round" stroke-linejoin="round" />
<rect x="88" y="374.2" width="10.2" height="10.6" rx="1.8" stroke="#868686" stroke-width="1.9" fill="none"/>
<path d="M82 379.8H73.7Q71.7 379.8 71.7 381.8V398.9Q71.7 400.9 73.7 400.9H92 M82 379.8V400.9 M71.7 390H92" stroke="#868686" stroke-width="1.9" fill="none" stroke-linecap="round" stroke-linejoin="round" />
<path d="M88.5 458.6A13.7 13.7 0 1 1 98.5 447.5" stroke="#868686" stroke-width="1.5" fill="none" stroke-linecap="round" stroke-linejoin="round" />
<circle cx="82.6" cy="438.4" r="2.6" stroke="#868686" stroke-width="0" fill="#868686"/>
<circle cx="82.6" cy="452.5" r="2.5" stroke="#868686" stroke-width="0" fill="#868686"/>
<path d="M82.6 438.4V452.5 M82.6 438.4L90.3 444" stroke="#868686" stroke-width="1.6" fill="none" stroke-linecap="round" stroke-linejoin="round" />
<circle cx="91.9" cy="452.5" r="8.3" stroke="#868686" stroke-width="0" fill="#181818"/>
<circle cx="91.9" cy="452.5" r="5.9" stroke="#868686" stroke-width="2.5" fill="none"/>
<circle cx="91.9" cy="452.5" r="2.7" stroke="#868686" stroke-width="0" fill="#868686"/>
<path fill-rule="evenodd" fill="#868686" d="M70.7 501.3A14.7 9.7 0 1 0 100.1 501.3A14.7 9.7 0 1 0 70.7 501.3Z M77.2 502.7A10.6 6.6 0 1 0 98.4 502.7A10.6 6.6 0 1 0 77.2 502.7Z"/>
<path fill-rule="evenodd" fill="#868686" stroke="#181818" stroke-width="1.5" paint-order="stroke" d="M82.9 498H93.6C96.6 498 97.7 500.3 97.7 502.3C97.7 504.6 96.4 506 94.4 506.6L99 513.9H93.6L89.9 507.2H88V513.9H82.9Z M88 501.3V503.7H91.5C92.5 503.7 92.8 503.1 92.8 502.5C92.8 501.9 92.5 501.3 91.5 501.3Z"/>
<circle cx="76" cy="560.4" r="1.5" stroke="#868686" stroke-width="0" fill="#868686"/>
<circle cx="84.9" cy="560.4" r="1.5" stroke="#868686" stroke-width="0" fill="#868686"/>
<circle cx="93.8" cy="560.4" r="1.5" stroke="#868686" stroke-width="0" fill="#868686"/>
<circle cx="84.9" cy="697.4" r="13.4" stroke="#868686" stroke-width="1.9" fill="none"/>
<circle cx="84.9" cy="694.6" r="5.8" stroke="#868686" stroke-width="1.9" fill="none"/>
<path d="M76.3 707.6A9.6 9.6 0 0 1 93.5 707.6" stroke="#868686" stroke-width="1.9" fill="none" stroke-linecap="round" stroke-linejoin="round" />
<path d="M81.84 747.21L82.46 741.42L87.34 741.42L87.96 747.21L92.49 743.56L95.94 747.01L92.29 751.54L98.08 752.16L98.08 757.04L92.29 757.66L95.94 762.19L92.49 765.64L87.96 761.99L87.34 767.78L82.46 767.78L81.84 761.99L77.31 765.64L73.86 762.19L77.51 757.66L71.72 757.04L71.72 752.16L77.51 751.54L73.86 747.01L77.31 743.56Z" stroke="#868686" stroke-width="1.9" fill="none" stroke-linecap="round" stroke-linejoin="round" stroke-linejoin="miter"/>
<circle cx="84.9" cy="754.6" r="3.3" stroke="#868686" stroke-width="1.9" fill="none"/>
<circle cx="94.5" cy="109.9" r="9.6" stroke="#868686" stroke-width="0" fill="#0078d4"/>
<text x="94.5" y="114.0" text-anchor="middle" font-family="Liberation Sans, sans-serif" font-weight="700" font-size="11.6" fill="#ffffff">1</text>
<circle cx="94.5" cy="225.5" r="9.6" stroke="#868686" stroke-width="0" fill="#0078d4"/>
<text x="94.5" y="229.6" text-anchor="middle" font-family="Liberation Sans, sans-serif" font-weight="700" font-size="11.6" fill="#ffffff">8</text>
<circle cx="94.5" cy="397.9" r="9.6" stroke="#868686" stroke-width="0" fill="#0078d4"/>
<text x="94.5" y="402.0" text-anchor="middle" font-family="Liberation Sans, sans-serif" font-weight="700" font-size="11.6" fill="#ffffff">3</text>
<rect x="617.6" y="53.6" width="10.8" height="1.3" fill="#cccccc"/>
<rect x="1137.8" y="46.8" width="15.60" height="15.30" rx="2" stroke="#cccccc" stroke-width="1.3" fill="none"/>
<path d="M1143.8 46.8V62.1" stroke="#cccccc" stroke-width="1.3" fill="none" stroke-linecap="round" stroke-linejoin="round" />
<rect x="1168.9" y="46.8" width="15.50" height="15.30" rx="2" stroke="#cccccc" stroke-width="1.3" fill="none"/>
<path d="M1168.9 57.7H1184.4" stroke="#cccccc" stroke-width="1.3" fill="none" stroke-linecap="round" stroke-linejoin="round" />
<rect x="1200.6" y="46.8" width="15.50" height="15.30" rx="2" stroke="#cccccc" stroke-width="1.3" fill="none"/>
<path d="M1209.9 46.8V62.1" stroke="#cccccc" stroke-width="1.3" fill="none" stroke-linecap="round" stroke-linejoin="round" />
<rect x="1232.9" y="47.8" width="5.40" height="13.20" rx="1.6" stroke="#cccccc" stroke-width="1.3" fill="none"/>
<rect x="1242.7" y="47.8" width="4.50" height="4.50" rx="1.4" stroke="#cccccc" stroke-width="1.3" fill="none"/>
<rect x="1242.7" y="56.4" width="4.50" height="4.60" rx="1.4" stroke="#cccccc" stroke-width="1.3" fill="none"/>
<path d="M1136.6 96.4A7.6 7.6 0 1 0 1136.4 89.3 M1135.3 85V89.4H1139.8 M1142.5 87.9V92.2L1146.1 95.6" stroke="#cccccc" stroke-width="1.3" fill="none" stroke-linecap="round" stroke-linejoin="round" />
<circle cx="1168.8" cy="86.6" r="2.1" stroke="#cccccc" stroke-width="1.3" fill="none"/>
<circle cx="1179.9" cy="99.1" r="2.1" stroke="#cccccc" stroke-width="1.3" fill="none"/>
<path d="M1168.8 88.9V96.3Q1168.8 99.1 1171.6 99.1H1175 M1172.4 96.3L1175.2 99.1L1172.4 101.9 M1179.9 96.8V89.4Q1179.9 86.6 1177.1 86.6H1174.2 M1176.8 83.8L1174 86.6L1176.8 89.4" stroke="#cccccc" stroke-width="1.3" fill="none" stroke-linecap="round" stroke-linejoin="round" />
<rect x="1199" y="85.1" width="14.40" height="13.80" rx="1.8" stroke="#cccccc" stroke-width="1.3" fill="none"/>
<path d="M1206.2 85.1V98.9" stroke="#cccccc" stroke-width="1.3" fill="none" stroke-linecap="round" stroke-linejoin="round" />
<circle cx="1230.8" cy="92.2" r="1.3" stroke="#868686" stroke-width="0" fill="#cccccc"/>
<circle cx="1236.9" cy="92.2" r="1.3" stroke="#868686" stroke-width="0" fill="#cccccc"/>
<circle cx="1243.0" cy="92.2" r="1.3" stroke="#868686" stroke-width="0" fill="#cccccc"/>
<path d="M161.8 120.9L168.0 126.5L161.8 132.1" stroke="#a9a9a9" stroke-width="1.1" fill="none" stroke-linecap="round" stroke-linejoin="round" />
<path d="M215.5 120.9L221.7 126.5L215.5 132.1" stroke="#a9a9a9" stroke-width="1.1" fill="none" stroke-linecap="round" stroke-linejoin="round" />
<path d="M268.5 120.9L274.7 126.5L268.5 132.1" stroke="#a9a9a9" stroke-width="1.1" fill="none" stroke-linecap="round" stroke-linejoin="round" />
<path d="M382.6 120.9L388.8 126.5L382.6 132.1" stroke="#a9a9a9" stroke-width="1.1" fill="none" stroke-linecap="round" stroke-linejoin="round" />
<path d="M485.6 120.9L491.8 126.5L485.6 132.1" stroke="#a9a9a9" stroke-width="1.1" fill="none" stroke-linecap="round" stroke-linejoin="round" />
<path d="M537.8 120.9L544.0 126.5L537.8 132.1" stroke="#a9a9a9" stroke-width="1.1" fill="none" stroke-linecap="round" stroke-linejoin="round" />
<path d="M630.8 120.9L637.0 126.5L630.8 132.1" stroke="#a9a9a9" stroke-width="1.1" fill="none" stroke-linecap="round" stroke-linejoin="round" />
<path d="M682.3 120.9L688.5 126.5L682.3 132.1" stroke="#a9a9a9" stroke-width="1.1" fill="none" stroke-linecap="round" stroke-linejoin="round" />
<path d="M764.0 120.9L770.2 126.5L764.0 132.1" stroke="#a9a9a9" stroke-width="1.1" fill="none" stroke-linecap="round" stroke-linejoin="round" />
<path d="M815.5 120.9L821.7 126.5L815.5 132.1" stroke="#a9a9a9" stroke-width="1.1" fill="none" stroke-linecap="round" stroke-linejoin="round" />
<path d="M919.9 120.9L926.1 126.5L919.9 132.1" stroke="#a9a9a9" stroke-width="1.1" fill="none" stroke-linecap="round" stroke-linejoin="round" />
<path d="M1003.6 120.9L1009.8000000000001 126.5L1003.6 132.1" stroke="#a9a9a9" stroke-width="1.1" fill="none" stroke-linecap="round" stroke-linejoin="round" />
<path d="M290.10 120.90Q288.06 120.90 288.06 123.10V124.50Q288.06 126.70 286.40 126.70Q288.06 126.70 288.06 128.90V130.30Q288.06 132.50 290.10 132.50" stroke="#cbcb41" stroke-width="1.6" fill="none" stroke-linecap="round" stroke-linejoin="round" />
<path d="M3.70 120.90Q1.67 120.90 1.67 123.10V124.50Q1.67 126.70 0.00 126.70Q1.67 126.70 1.67 128.90V130.30Q1.67 132.50 3.70 132.50" transform="translate(298.90 0) scale(-1 1)" stroke="#cbcb41" stroke-width="1.6" fill="none" stroke-linecap="round" stroke-linejoin="round"/>
<path d="M399.2 120.2H396.2V133.0H399.2 M409.6 120.2H412.6V133.0H409.6" stroke="#c5c5c5" stroke-width="1.2" fill="none" stroke-linecap="round" stroke-linejoin="round" />
<path d="M554.0 120.2H551.0V133.0H554.0 M564.4 120.2H567.4V133.0H564.4" stroke="#c5c5c5" stroke-width="1.2" fill="none" stroke-linecap="round" stroke-linejoin="round" />
<path d="M698.8 120.2H695.8V133.0H698.8 M709.2 120.2H712.2V133.0H709.2" stroke="#c5c5c5" stroke-width="1.2" fill="none" stroke-linecap="round" stroke-linejoin="round" />
<path d="M504.80 120.40Q502.49 120.40 502.49 122.60V124.50Q502.49 126.70 500.60 126.70Q502.49 126.70 502.49 128.90V130.80Q502.49 133.00 504.80 133.00" stroke="#c5c5c5" stroke-width="1.15" fill="none" stroke-linecap="round" stroke-linejoin="round" />
<path d="M4.20 120.40Q1.89 120.40 1.89 122.60V124.50Q1.89 126.70 0.00 126.70Q1.89 126.70 1.89 128.90V130.80Q1.89 133.00 4.20 133.00" transform="translate(514.60 0) scale(-1 1)" stroke="#c5c5c5" stroke-width="1.15" fill="none" stroke-linecap="round" stroke-linejoin="round"/>
<path d="M649.40 120.40Q647.09 120.40 647.09 122.60V124.50Q647.09 126.70 645.20 126.70Q647.09 126.70 647.09 128.90V130.80Q647.09 133.00 649.40 133.00" stroke="#c5c5c5" stroke-width="1.15" fill="none" stroke-linecap="round" stroke-linejoin="round" />
<path d="M4.20 120.40Q1.89 120.40 1.89 122.60V124.50Q1.89 126.70 0.00 126.70Q1.89 126.70 1.89 128.90V130.80Q1.89 133.00 4.20 133.00" transform="translate(659.20 0) scale(-1 1)" stroke="#c5c5c5" stroke-width="1.15" fill="none" stroke-linecap="round" stroke-linejoin="round"/>
<path d="M782.40 120.40Q780.09 120.40 780.09 122.60V124.50Q780.09 126.70 778.20 126.70Q780.09 126.70 780.09 128.90V130.80Q780.09 133.00 782.40 133.00" stroke="#c5c5c5" stroke-width="1.15" fill="none" stroke-linecap="round" stroke-linejoin="round" />
<path d="M4.20 120.40Q1.89 120.40 1.89 122.60V124.50Q1.89 126.70 0.00 126.70Q1.89 126.70 1.89 128.90V130.80Q1.89 133.00 4.20 133.00" transform="translate(792.20 0) scale(-1 1)" stroke="#c5c5c5" stroke-width="1.15" fill="none" stroke-linecap="round" stroke-linejoin="round"/>
<path d="M834.00 120.40Q831.69 120.40 831.69 122.60V124.50Q831.69 126.70 829.80 126.70Q831.69 126.70 831.69 128.90V130.80Q831.69 133.00 834.00 133.00" stroke="#c5c5c5" stroke-width="1.15" fill="none" stroke-linecap="round" stroke-linejoin="round" />
<path d="M4.20 120.40Q1.89 120.40 1.89 122.60V124.50Q1.89 126.70 0.00 126.70Q1.89 126.70 1.89 128.90V130.80Q1.89 133.00 4.20 133.00" transform="translate(843.80 0) scale(-1 1)" stroke="#c5c5c5" stroke-width="1.15" fill="none" stroke-linecap="round" stroke-linejoin="round"/>
<path d="M938.60 120.40Q936.29 120.40 936.29 122.60V124.50Q936.29 126.70 934.40 126.70Q936.29 126.70 936.29 128.90V130.80Q936.29 133.00 938.60 133.00" stroke="#c5c5c5" stroke-width="1.15" fill="none" stroke-linecap="round" stroke-linejoin="round" />
<path d="M4.20 120.40Q1.89 120.40 1.89 122.60V124.50Q1.89 126.70 0.00 126.70Q1.89 126.70 1.89 128.90V130.80Q1.89 133.00 4.20 133.00" transform="translate(948.40 0) scale(-1 1)" stroke="#c5c5c5" stroke-width="1.15" fill="none" stroke-linecap="round" stroke-linejoin="round"/>
<rect x="1017.5" y="119.7" width="15.50" height="12.10" rx="1.6" stroke="#c5c5c5" stroke-width="1.3" fill="none"/>
<text x="1025.3" y="127.9" text-anchor="middle" font-family="Liberation Sans, sans-serif" font-weight="700" font-size="6.4" fill="#c5c5c5">abc</text>
<path d="M135.10 86.90Q133.17 86.90 133.17 89.10V90.40Q133.17 92.60 131.60 92.60Q133.17 92.60 133.17 94.80V96.10Q133.17 98.30 135.10 98.30" stroke="#cbcb41" stroke-width="1.6" fill="none" stroke-linecap="round" stroke-linejoin="round" />
<path d="M3.50 86.90Q1.57 86.90 1.57 89.10V90.40Q1.57 92.60 0.00 92.60Q1.57 92.60 1.57 94.80V96.10Q1.57 98.30 3.50 98.30" transform="translate(143.00 0) scale(-1 1)" stroke="#cbcb41" stroke-width="1.6" fill="none" stroke-linecap="round" stroke-linejoin="round"/>
<path d="M71.2 793.9L76.1 798.3L71.2 802.9 M81.5 789.5L76.8 794.1L81.5 798.5" stroke="#ffffff" stroke-width="1.2" fill="none" stroke-linecap="round" stroke-linejoin="round" />
<circle cx="108.7" cy="790.7" r="2.1" stroke="#cccccc" stroke-width="1.2" fill="none"/>
<circle cx="116" cy="794" r="2.1" stroke="#cccccc" stroke-width="1.2" fill="none"/>
<circle cx="108.7" cy="802.4" r="2.1" stroke="#cccccc" stroke-width="1.2" fill="none"/>
<path d="M108.7 793V800.1 M116 796.3C116 798.6 113.6 798.7 112 798.8C110 798.9 108.7 799.2 108.7 800.1" stroke="#cccccc" stroke-width="1.2" fill="none" stroke-linecap="round" stroke-linejoin="round" />
<path d="M195.7 795.4A5.3 5.3 0 0 1 205.9 795.6 M206.0 797.7A5.3 5.3 0 0 1 195.8 797.7" stroke="#cccccc" stroke-width="1.2" fill="none" stroke-linecap="round" stroke-linejoin="round" />
<path d="M203.6 794.9L206.2 797.3L208 794.4 M193.6 798.4L195.6 795.6L198.2 797.9" stroke="#cccccc" stroke-width="1.2" fill="none" stroke-linecap="round" stroke-linejoin="round" />
<circle cx="229.5" cy="791.9" r="2.0" stroke="#cccccc" stroke-width="1.1" fill="none"/>
<circle cx="229.5" cy="801.6" r="2.0" stroke="#cccccc" stroke-width="1.1" fill="none"/>
<circle cx="238.2" cy="795.8" r="2.0" stroke="#cccccc" stroke-width="1.1" fill="none"/>
<path d="M229.5 794V799.5 M229.5 803.6V805.2" stroke="#cccccc" stroke-width="1.1" fill="none" stroke-linecap="round" stroke-linejoin="round" />
<path d="M233.9 789.4V804.6" stroke="#cccccc" stroke-width="1.9" fill="none" stroke-linecap="round" stroke-linejoin="round" />
<path d="M238.2 797.9V800.2Q238.2 801.6 236.8 801.6H234.4" stroke="#cccccc" stroke-width="1.1" fill="none" stroke-linecap="round" stroke-linejoin="round" />
<circle cx="270.3" cy="796.5" r="7.0" stroke="#cccccc" stroke-width="1.1" fill="none"/>
<path d="M267.6 793.8L273 799.2 M273 793.8L267.6 799.2" stroke="#cccccc" stroke-width="1.1" fill="none" stroke-linecap="round" stroke-linejoin="round" />
<path d="M304.4 789.6L311.5 802.6H297.3Z M304.4 794.2V798.8 M304.4 800.6V801" stroke="#cccccc" stroke-width="1.1" fill="none" stroke-linecap="round" stroke-linejoin="round" />
<path d="M346.6 799.4C347.4 794.6 350.6 791.6 355.4 791.4V788.6L361.2 793.7L355.4 798.8V796.1C351.8 796.1 349 797.1 346.6 799.4Z" stroke="#cccccc" stroke-width="1.15" fill="none" stroke-linecap="round" stroke-linejoin="round" />
<circle cx="352.4" cy="801.6" r="2.5" stroke="#cccccc" stroke-width="1.2" fill="none"/>
<circle cx="663.3" cy="796.5" r="6.9" stroke="#cccccc" stroke-width="1.1" fill="none"/>
<path d="M994.00 790.60Q991.91 790.60 991.91 792.80V794.40Q991.91 796.60 990.20 796.60Q991.91 796.60 991.91 798.80V800.40Q991.91 802.60 994.00 802.60" stroke="#cccccc" stroke-width="1.1" fill="none" stroke-linecap="round" stroke-linejoin="round" />
<path d="M3.80 790.60Q1.71 790.60 1.71 792.80V794.40Q1.71 796.60 0.00 796.60Q1.71 796.60 1.71 798.80V800.40Q1.71 802.60 3.80 802.60" transform="translate(1002.60 0) scale(-1 1)" stroke="#cccccc" stroke-width="1.1" fill="none" stroke-linecap="round" stroke-linejoin="round"/>
<path d="M1069.5 797.2C1069.2 793.6 1071 791.6 1074 791.5C1076.4 791.4 1077.6 792.4 1077.8 794.2 M1077.8 794.2C1078 792.2 1079.4 791.3 1081.4 791.6C1083.6 792 1083.9 794.4 1083.2 796.8" stroke="#cccccc" stroke-width="1.7" fill="none" stroke-linecap="round" stroke-linejoin="round" />
<path d="M1069.5 797C1067.6 798 1067.4 800 1068.6 801.4C1070.4 803.4 1073.4 804.4 1076.4 804.3C1078.4 804.2 1080 803.8 1081.2 803.1 M1083.3 796.8C1084.4 797.8 1084.3 799.4 1083.6 800.4" stroke="#cccccc" stroke-width="1.5" fill="none" stroke-linecap="round" stroke-linejoin="round" />
<path d="M1067.4 791.8L1083.6 804.8" stroke="#cccccc" stroke-width="1.5" fill="none" stroke-linecap="round" stroke-linejoin="round" />
<circle cx="1079.7" cy="794.3" r="1.3" stroke="#cccccc" stroke-width="1.2" fill="none"/>
<path d="M1103.6 797.6L1106.6 801.6L1114.9 791.7 M1109.4 800.2L1110.7 801.7L1119.2 791.7" stroke="#b4b4b4" stroke-width="1.0" fill="none" stroke-linecap="round" stroke-linejoin="round" />
<circle cx="1199.6" cy="795.6" r="2.6" stroke="#cccccc" stroke-width="1.15" fill="none"/>
<path d="M1194.8 803.6A4.9 4.9 0 0 1 1204.5 803.6 M1198.3 791.3V789.7H1208.9V796.2H1206.4L1204.6 798" stroke="#cccccc" stroke-width="1.15" fill="none" stroke-linecap="round" stroke-linejoin="round" />
<path d="M1232.4 801.3H1243.6V800.2C1242.6 799.2 1242.4 797.6 1242.4 796 M1232.4 801.3V800.2C1233.4 799.2 1233.6 797.4 1233.6 795.4C1233.6 792.2 1235.4 789.8 1238.4 789.6" stroke="#cccccc" stroke-width="1.15" fill="none" stroke-linecap="round" stroke-linejoin="round" />
<path d="M1236.6 802.6L1237.9 803.8L1239.2 802.6" stroke="#cccccc" stroke-width="1.15" fill="none" stroke-linecap="round" stroke-linejoin="round" />
<circle cx="1242.1" cy="792.4" r="3.1" stroke="#868686" stroke-width="0" fill="#cccccc"/>
<path d="M639.3 191.4H640.6 M639.5 197.0H640.8" stroke="#bdbdbd" stroke-width="1.5" fill="none" stroke-linecap="round" stroke-linejoin="round" />
<path d="M621.2 174.0L627.2 179.8L633.2 174.0" stroke="#c5c5c5" stroke-width="1.2" fill="none" stroke-linecap="round" stroke-linejoin="round" />
<path d="M843.4 163.4V166.4H862.2V163.4" stroke="#c5c5c5" stroke-width="1.1" fill="none" stroke-linecap="round" stroke-linejoin="round" />
<rect x="871.9" y="162.2" width="5" height="4.8" fill="#c5c5c5"/>
<path d="M882.7 153.2V162 M878.9 155.4L886.5 159.8 M886.5 155.4L878.9 159.8" stroke="#c5c5c5" stroke-width="1.2" fill="none" stroke-linecap="round" stroke-linejoin="round" />
<path d="M1007.2 165.6V152.2 M1001.0 158.2L1007.2 152L1013.4 158.2" stroke="#c5c5c5" stroke-width="1.2" fill="none" stroke-linecap="round" stroke-linejoin="round" />
<path d="M1037.0 151.8V165.2 M1030.8 159.2L1037.0 165.4L1043.2 159.2" stroke="#c5c5c5" stroke-width="1.2" fill="none" stroke-linecap="round" stroke-linejoin="round" />
<path d="M1058 153.6H1074.6 M1058 158.6H1074.6 M1058 163.6H1068.6" stroke="#c5c5c5" stroke-width="1.2" fill="none" stroke-linecap="round" stroke-linejoin="round" />
<path d="M1090.4 153.6L1100.4 163.8 M1100.4 153.6L1090.4 163.8" stroke="#c5c5c5" stroke-width="1.2" fill="none" stroke-linecap="round" stroke-linejoin="round" />
<rect x="904.7" y="192.0" width="9.90" height="8.40" rx="1.4" stroke="#c5c5c5" stroke-width="1.1" fill="none"/>
<text x="909.7" y="198.7" text-anchor="middle" font-family="Liberation Sans, sans-serif" font-weight="700" font-size="6.6" fill="#c5c5c5">c</text>
<text x="912.6" y="189.6" text-anchor="middle" font-family="Liberation Sans, sans-serif" font-weight="700" font-size="6.6" fill="#c5c5c5">b</text>
<path d="M909.6 185.2H907.6V189.4 M905.6 187.6L907.6 189.6L909.6 187.6" stroke="#c5c5c5" stroke-width="1.0" fill="none" stroke-linecap="round" stroke-linejoin="round" />
<rect x="933.6" y="193.2" width="12.80" height="7.40" rx="1.4" stroke="#c5c5c5" stroke-width="1.1" fill="none"/>
<path d="M936.2 191.2H947.4Q948.8 191.2 948.8 192.6V198.4" stroke="#c5c5c5" stroke-width="1.1" fill="none" stroke-linecap="round" stroke-linejoin="round" />
<text x="940" y="199" text-anchor="middle" font-family="Liberation Sans, sans-serif" font-weight="700" font-size="5.6" fill="#c5c5c5">ac</text>
<text x="944.6" y="188.4" text-anchor="middle" font-family="Liberation Sans, sans-serif" font-weight="700" font-size="5.6" fill="#c5c5c5">ab</text>
<path d="M940.4 185.4H936.4V189.2 M934.6 187.6L936.4 189.4L938.2 187.6" stroke="#c5c5c5" stroke-width="1.0" fill="none" stroke-linecap="round" stroke-linejoin="round" /></svg>
<span class="t" style="left:550.70px;top:44.39px;font-size:15.6px;line-height:20px;color:#cccccc;letter-spacing:-0.031px;">birth.json</span>
<span class="t" style="left:634.30px;top:44.39px;font-size:15.6px;line-height:20px;color:#cccccc;letter-spacing:-0.059px;">opencrvs-farajaland</span>
<span class="t" style="left:152.40px;top:84.39px;font-size:15.6px;line-height:20px;color:#73c991;letter-spacing:0.480px;">birth.json</span>
<span class="t" style="left:226.30px;top:85.24px;font-size:14.6px;line-height:19px;color:#73c991;">U</span>
<span class="t" style="left:132.60px;top:118.39px;font-size:15.6px;line-height:20px;color:#a9a9a9;letter-spacing:0.952px;">src</span>
<span class="t" style="left:174.40px;top:118.39px;font-size:15.6px;line-height:20px;color:#a9a9a9;letter-spacing:0.604px;">form</span>
<span class="t" style="left:227.30px;top:118.39px;font-size:15.6px;line-height:20px;color:#a9a9a9;letter-spacing:0.914px;">birth</span>
<span class="t" style="left:307.30px;top:118.39px;font-size:15.6px;line-height:20px;color:#a9a9a9;letter-spacing:0.469px;">birth.json</span>
<span class="t" style="left:418.00px;top:118.39px;font-size:15.6px;line-height:20px;color:#a9a9a9;letter-spacing:0.454px;">sections</span>
<span class="t" style="left:521.50px;top:118.39px;font-size:15.6px;line-height:20px;color:#a9a9a9;">6</span>
<span class="t" style="left:573.00px;top:118.39px;font-size:15.6px;line-height:20px;color:#a9a9a9;letter-spacing:0.322px;">groups</span>
<span class="t" style="left:665.60px;top:118.39px;font-size:15.6px;line-height:20px;color:#a9a9a9;">0</span>
<span class="t" style="left:717.70px;top:118.39px;font-size:15.6px;line-height:20px;color:#a9a9a9;letter-spacing:0.419px;">fields</span>
<span class="t" style="left:798.90px;top:118.39px;font-size:15.6px;line-height:20px;color:#a9a9a9;">2</span>
<span class="t" style="left:850.60px;top:118.39px;font-size:15.6px;line-height:20px;color:#a9a9a9;letter-spacing:0.262px;">mapping</span>
<span class="t" style="left:955.30px;top:118.39px;font-size:15.6px;line-height:20px;color:#a9a9a9;letter-spacing:0.396px;">query</span>
<span class="t" style="left:1039.20px;top:118.39px;font-size:15.6px;line-height:20px;color:#a9a9a9;letter-spacing:0.384px;">operation</span>
<span class="t" style="left:125.00px;top:788.11px;font-size:14.4px;line-height:19px;color:#cccccc;letter-spacing:0.526px;">develop*</span>
<span class="t" style="left:283.70px;top:788.11px;font-size:14.4px;line-height:19px;color:#cccccc;">0</span>
<span class="t" style="left:317.90px;top:788.11px;font-size:14.4px;line-height:19px;color:#cccccc;">0</span>
<span class="t" style="left:367.00px;top:788.11px;font-size:14.4px;line-height:19px;color:#cccccc;letter-spacing:0.021px;">Live Share</span>
<span class="t" style="left:455.70px;top:788.11px;font-size:14.4px;line-height:19px;color:#cccccc;letter-spacing:0.570px;">mwanga-staging</span>
<span class="t" style="left:588.40px;top:788.11px;font-size:14.4px;line-height:19px;color:#cccccc;letter-spacing:0.614px;">default</span>
<span class="t" style="left:676.20px;top:788.11px;font-size:14.4px;line-height:19px;color:#cccccc;letter-spacing:0.387px;">Watch</span>
<span class="t" style="left:805.30px;top:788.11px;font-size:14.4px;line-height:19px;color:#cccccc;letter-spacing:0.312px;">Spaces: 2</span>
<span class="t" style="left:891.70px;top:788.11px;font-size:14.4px;line-height:19px;color:#cccccc;letter-spacing:0.530px;">UTF-8</span>
<span class="t" style="left:954.60px;top:788.11px;font-size:14.4px;line-height:19px;color:#cccccc;letter-spacing:-0.797px;">LF</span>
<span class="t" style="left:1012.40px;top:788.11px;font-size:14.4px;line-height:19px;color:#cccccc;letter-spacing:-0.330px;">JSON</span>
<span class="t" style="left:1124.30px;top:788.11px;font-size:14.4px;line-height:19px;color:#cccccc;letter-spacing:0.487px;">Prettier</span>
<span class="t" style="left:639.20px;top:149.29px;font-size:15.6px;line-height:20px;color:#cccccc;letter-spacing:0.187px;">mentToFieldTransformer</span>
<span class="t" style="left:643.20px;top:183.29px;font-size:15.6px;line-height:20px;color:#cccccc;letter-spacing:0.334px;">AttachmentToFieldTransformer</span>
<span class="t" style="left:819.40px;top:152.23px;font-size:12.6px;line-height:16px;color:#c0c0c0;letter-spacing:-0.706px;">Aa</span>
<span class="t" style="left:845.80px;top:150.73px;font-size:12.6px;line-height:16px;color:#c0c0c0;letter-spacing:-0.216px;">ab</span>
<span class="t" style="left:871.70px;top:184.33px;font-size:12.6px;line-height:16px;color:#c0c0c0;letter-spacing:-1.513px;">AB</span>
<span class="t" style="left:900.30px;top:151.11px;font-size:14.4px;line-height:19px;color:#cccccc;letter-spacing:0.457px;">2 of 5</span>
</div><div id="wb"></div></div></body></html>
